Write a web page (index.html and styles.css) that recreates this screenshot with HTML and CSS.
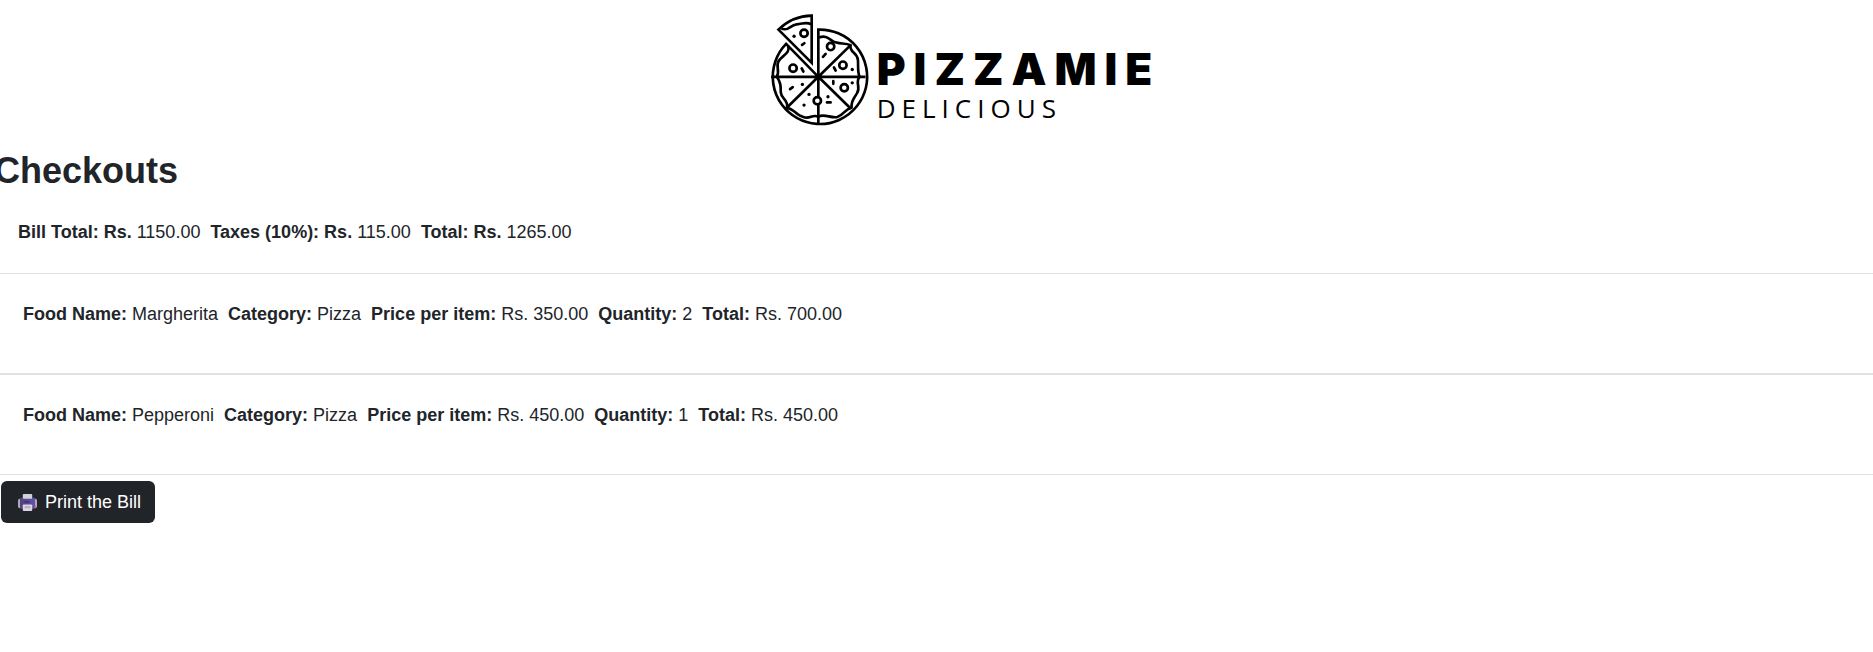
FILE: index.html
```html
<!DOCTYPE html>
<html lang="en">
<head>
<meta charset="utf-8">
<title>Checkouts</title>
<link rel="stylesheet" href="styles.css">
</head>
<body>
<header class="brand">
  <svg class="brand-mark" viewBox="0 0 300 340" aria-hidden="true">
    <g fill="none" stroke="#000" stroke-width="8" stroke-linejoin="round">
      <path d="M148 44A142 142 0 1 1 51 87L148 186Z" stroke-linejoin="miter"/>
      <path d="M6 186H290M148 186V328M148 186L246 90M148 186L246 282M148 186L50 282"/>
      <path d="M128 2V144L28 44Q70 3 128 2Z" stroke-linejoin="miter"/>
      <path d="M37 41C60 50 62 30 83 28S112 20 127 28"/>
      <path d="M150 68C170 60 178 70 190 78C208 90 228 82 245 91C240 113 265 111 267 135C269 153 265 170 272 186C258 203 276 216 265 234C257 250 246 256 248 279C226 284 226 300 205 307C185 311 166 296 148 306C130 297 123 315 103 307C81 302 72 280 54 280C58 253 36 253 35 233C35 214 35 203 23 186C34 168 18 154 29 138C43 120 64 113 57 93"/>
    </g>
    <g fill="none" stroke="#000" stroke-width="8">
      <circle cx="105" cy="55" r="11"/><circle cx="185" cy="95" r="11"/>
      <circle cx="72" cy="160" r="11"/><circle cx="222" cy="151" r="11"/>
      <circle cx="226" cy="219" r="11"/><circle cx="145" cy="258" r="11" fill="#fff"/>
      <path stroke-linecap="round" d="M99 90l7-5M162 126l8-9M98 161l5 9M195 158l5 9M193 199v8M63 223l8-6M174 263h11"/>
    </g>
    <g fill="#000">
      <circle cx="75" cy="64" r="5"/><circle cx="250" cy="164" r="5"/><circle cx="250" cy="204" r="5"/>
      <circle cx="100" cy="209" r="5"/><circle cx="120" cy="239" r="5"/><circle cx="177" cy="246" r="5"/><circle cx="105" cy="271" r="5"/>
      <circle cx="148" cy="186" r="10"/>
    </g>
  </svg>
  <div class="brand-text">
    <span class="brand-name">PIZZAMIE</span>
    <span class="brand-tag">DELICIOUS</span>
  </div>
</header>
<main>
  <h1 class="title">Checkouts</h1>
  <p class="summary"><b>Bill Total: Rs.</b> 1150.00&nbsp; <b>Taxes (10%): Rs.</b> 115.00&nbsp; <b>Total: Rs.</b> 1265.00</p>
  <ul class="items">
    <li class="item"><b>Food Name:</b> Margherita&nbsp; <b>Category:</b> Pizza&nbsp; <b>Price per item:</b> Rs. 350.00&nbsp; <b>Quantity:</b> 2&nbsp; <b>Total:</b> Rs. 700.00</li>
    <li class="item"><b>Food Name:</b> Pepperoni&nbsp; <b>Category:</b> Pizza&nbsp; <b>Price per item:</b> Rs. 450.00&nbsp; <b>Quantity:</b> 1&nbsp; <b>Total:</b> Rs. 450.00</li>
  </ul>
  <button class="print" type="button">
    <svg class="print-icon" viewBox="0 0 20 18" aria-hidden="true">
      <defs><linearGradient id="body"><stop offset="0" stop-color="#54407c"/><stop offset="1" stop-color="#5a55ad"/></linearGradient></defs>
      <rect x="0" y="5" width="20" height="10" rx="2" fill="#b9b0c4"/>
      <rect x="2" y="4" width="16" height="11" rx="1" fill="url(#body)"/>
      <rect x="5" y="0" width="10" height="5" rx="1" fill="#d5cedb"/>
      <rect x="7" y="8" width="5" height="1" fill="#30264c"/>
      <rect x="5" y="11" width="10" height="7" rx="1" fill="#ddd5e3"/>
      <rect x="7" y="13" width="6" height="2" fill="#b5abc0"/>
      <circle cx="18" cy="13" r="1" fill="#e0446c"/>
    </svg>
    Print the Bill
  </button>
</main>
</body>
</html>
```
FILE: styles.css
```css
body {
  margin: 0;
  background: #fff;
  color: #212529;
  font: 18px/28px "Liberation Sans", Arial, sans-serif;
}
.brand {
  display: flex;
  justify-content: center;
  gap: 8px;
  padding: 15px 0 23px 56px;
  color: #000;
}
.brand-mark {
  width: 100px;
  height: 113px;
  overflow: visible;
}
.brand-text {
  display: flex;
  flex-direction: column;
  padding-top: 26px;
}
.brand-name {
  font: 900 44px/56px Inter, sans-serif;
  letter-spacing: 8px;
}
.brand-tag {
  font: 400 26px/22px "Open Sans", sans-serif;
  letter-spacing: 6px;
}
.title {
  margin: 0 0 27px -6px;
  font-size: 36px;
  line-height: 40px;
}
.summary {
  margin: 0;
  padding: 0 18px 27px;
  border-bottom: 1px solid #dee2e6;
}
.items {
  margin: 0;
  padding: 0;
  list-style: none;
}
.item {
  padding: 26px 23px 45px;
  border-bottom: 2px solid #dee2e6;
}
.item:last-child {
  border-bottom-width: 1px;
}
.print {
  display: flex;
  align-items: center;
  gap: 8px;
  margin: 6px 1px;
  padding: 7px 14px 7px 17px;
  border: 0;
  border-radius: 6px;
  background: #212529;
  color: #fff;
  font: inherit;
}
.print-icon {
  width: 19px;
  height: 17px;
}
```
